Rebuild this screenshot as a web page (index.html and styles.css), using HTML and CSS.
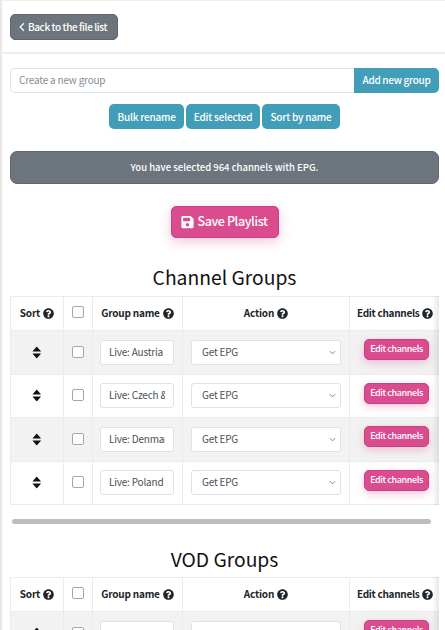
FILE: index.html
```html
<!DOCTYPE html>
<html lang="en">
<head>
<meta charset="utf-8">
<title>Playlist groups</title>
<link rel="stylesheet" href="styles.css">
</head>
<body>
<div class="page">
  <header class="topbar">
    <button class="btn btn-grey back"><svg class="chev" viewBox="0 0 8 12"><path d="M6.5 1 1.5 6l5 5" fill="none" stroke="currentColor" stroke-width="1.6"/></svg>Back to the file list</button>
  </header>
  <main class="content">
    <div class="newgroup">
      <input class="newgroup-input" placeholder="Create a new group">
      <button class="btn-add">Add new group</button>
    </div>
    <div class="actions">
      <button class="btn btn-teal">Bulk rename</button>
      <button class="btn btn-teal">Edit selected</button>
      <button class="btn btn-teal">Sort by name</button>
    </div>
    <div class="notice">You have selected 964 channels with EPG.</div>
    <div class="save-row">
      <button class="btn-save"><svg class="disk" viewBox="0 0 448 512"><path fill="currentColor" d="M433.9 129.9l-83.9-83.9A48 48 0 0 0 316.1 32H48C21.5 32 0 53.5 0 80v352c0 26.5 21.5 48 48 48h352c26.5 0 48-21.5 48-48V163.9a48 48 0 0 0-14.1-34zM224 416c-35.3 0-64-28.7-64-64s28.7-64 64-64 64 28.7 64 64-28.7 64-64 64zm96-304.5V212c0 6.6-5.4 12-12 12H76c-6.6 0-12-5.4-12-12V108c0-6.6 5.4-12 12-12h228.5c3.2 0 6.2 1.3 8.5 3.5l3.5 3.5c2.3 2.3 3.5 5.3 3.5 8.5z"/></svg>Save Playlist</button>
    </div>

    <h2 class="title">Channel Groups</h2>
    <div class="scroller">
      <table class="grid">
        <thead>
          <tr>
            <th class="c-sort">Sort <svg class="help" viewBox="0 0 512 512"><use href="#q"/></svg></th>
            <th class="c-check"><span class="check"></span></th>
            <th class="c-name">Group name <svg class="help" viewBox="0 0 512 512"><use href="#q"/></svg></th>
            <th class="c-action">Action <svg class="help" viewBox="0 0 512 512"><use href="#q"/></svg></th>
            <th class="c-edit"><span class="edit-head">Edit channels <svg class="help" viewBox="0 0 512 512"><use href="#q"/></svg></span></th>
          </tr>
        </thead>
        <tbody>
          <tr class="odd">
            <td><svg class="sort" viewBox="0 0 12 16"><use href="#s"/></svg></td>
            <td><span class="check"></span></td>
            <td><input class="name" value="Live: Austria"></td>
            <td><div class="select">Get EPG<svg class="caret" viewBox="0 0 8 5"><path d="M1 1l3 3 3-3" fill="none" stroke="currentColor" stroke-width="1"/></svg></div></td>
            <td><button class="btn-edit">Edit channels</button></td>
          </tr>
          <tr>
            <td><svg class="sort" viewBox="0 0 12 16"><use href="#s"/></svg></td>
            <td><span class="check"></span></td>
            <td><input class="name" value="Live: Czech &amp; Slovakia"></td>
            <td><div class="select">Get EPG<svg class="caret" viewBox="0 0 8 5"><path d="M1 1l3 3 3-3" fill="none" stroke="currentColor" stroke-width="1"/></svg></div></td>
            <td><button class="btn-edit">Edit channels</button></td>
          </tr>
          <tr class="odd">
            <td><svg class="sort" viewBox="0 0 12 16"><use href="#s"/></svg></td>
            <td><span class="check"></span></td>
            <td><input class="name" value="Live: Denmark"></td>
            <td><div class="select">Get EPG<svg class="caret" viewBox="0 0 8 5"><path d="M1 1l3 3 3-3" fill="none" stroke="currentColor" stroke-width="1"/></svg></div></td>
            <td><button class="btn-edit">Edit channels</button></td>
          </tr>
          <tr>
            <td><svg class="sort" viewBox="0 0 12 16"><use href="#s"/></svg></td>
            <td><span class="check"></span></td>
            <td><input class="name" value="Live: Poland"></td>
            <td><div class="select">Get EPG<svg class="caret" viewBox="0 0 8 5"><path d="M1 1l3 3 3-3" fill="none" stroke="currentColor" stroke-width="1"/></svg></div></td>
            <td><button class="btn-edit">Edit channels</button></td>
          </tr>
        </tbody>
      </table>
    </div>
    <div class="scrollbar"><div class="thumb"></div></div>

    <h2 class="title title-vod">VOD Groups</h2>
    <div class="scroller">
      <table class="grid">
        <thead>
          <tr>
            <th class="c-sort">Sort <svg class="help" viewBox="0 0 512 512"><use href="#q"/></svg></th>
            <th class="c-check"><span class="check"></span></th>
            <th class="c-name">Group name <svg class="help" viewBox="0 0 512 512"><use href="#q"/></svg></th>
            <th class="c-action">Action <svg class="help" viewBox="0 0 512 512"><use href="#q"/></svg></th>
            <th class="c-edit"><span class="edit-head">Edit channels <svg class="help" viewBox="0 0 512 512"><use href="#q"/></svg></span></th>
          </tr>
        </thead>
        <tbody>
          <tr class="odd">
            <td><svg class="sort" viewBox="0 0 12 16"><use href="#s"/></svg></td>
            <td><span class="check"></span></td>
            <td><input class="name" value=""></td>
            <td><div class="select"></div></td>
            <td><button class="btn-edit">Edit channels</button></td>
          </tr>
        </tbody>
      </table>
    </div>
  </main>
</div>
<svg class="defs" aria-hidden="true">
  <symbol id="q" viewBox="0 0 512 512"><path fill="currentColor" d="M504 256c0 137-111 248-248 248S8 393 8 256 119 8 256 8s248 111 248 248zM262.700 90c-54.500 0-89.300 23-116.500 63.800-3.500 5.300-2.400 12.400 2.700 16.300l34.700 26.300c5.200 3.900 12.600 3 16.700-2.100 17.900-22.700 30.100-35.800 57.300-35.800 20.400 0 45.700 13.100 45.700 32.900 0 14.900-12.300 22.600-32.400 33.900C247.100 238.500 216 254.900 216 296v4c0 6.600 5.400 12 12 12h56c6.600 0 12-5.400 12-12v-1.300c0-28.500 83.200-29.700 83.200-106.700 0-58-60.200-102-116.500-102zM256 338c-25.400 0-46 20.600-46 46s20.600 46 46 46 46-20.600 46-46-20.600-46-46-46z"/></symbol>
  <symbol id="s" viewBox="0 0 12 16"><path fill="currentColor" d="M6 0.500 11.500 6.800H0.500zM6 15.500 0.500 9.200H11.500z"/></symbol>
</svg>
</body>
</html>
```
FILE: styles.css
```css
* { box-sizing: border-box; }
html, body { margin: 0; padding: 0; background: #fff; height: 100%; overflow: hidden; }
body {
  font-family: "Noto Sans CJK JP", "Noto Sans", sans-serif;
  color: #212529;
  font-size: 10px;
  letter-spacing: -0.2px;
}
.page { width: 445px; height: 630px; overflow: hidden; border-left: 2px solid #e8e8e8; border-top: 1px solid #efefef; }
.topbar { height: 53px; padding: 13px 0 0 8px; border-bottom: 2px solid #eee; }
.btn { border: 0; font: inherit; letter-spacing: inherit; border-radius: 5px; cursor: pointer; white-space: nowrap; }
.btn-grey { display: flex; align-items: center; gap: 3px; width: 108px; height: 26px; padding: 0 0 2px 8px; background: #6c757d; color: #fff; font-size: 10px; letter-spacing: -0.4px; font-weight: 500; border: 1px solid #5f676e; }
.chev { width: 6px; height: 10px; margin-top: 1px; }
.content { padding: 14px 6px 0 8px; }
.newgroup { display: flex; height: 25px; }
.newgroup-input { flex: 1; min-width: 0; border: 1px solid #dee2e6; border-right: 0; border-radius: 5px 0 0 5px; padding: 0 8px 2px; font: inherit; letter-spacing: inherit; font-size: 10px; outline: 0; }
.newgroup-input::placeholder { color: #868e96; }
.btn-add { width: 85px; padding: 0 0 2px; white-space: nowrap; border: 0; background: #429eb8; color: #fff; font: inherit; letter-spacing: -0.3px; font-size: 10px; font-weight: 500; border-radius: 0 5px 5px 0; }
.actions { display: flex; justify-content: center; gap: 2px; margin-top: 11px; }
.btn-teal { height: 25px; padding: 0 8px 1px; background: #429eb8; color: #fff; font-size: 10px; font-weight: 500; }
.notice { height: 33px; margin-top: 22px; padding-bottom: 2px; background: #6c757d; color: #fff; border: 1px solid #5f676e; border-radius: 7px; display: flex; align-items: center; justify-content: center; font-size: 9.500px; letter-spacing: 0; font-weight: 500; }
.save-row { display: flex; justify-content: center; margin-top: 22px; }
.btn-save { display: flex; align-items: center; justify-content: center; gap: 3px; width: 108px; height: 32px; padding: 0 0 3px; white-space: nowrap; background: #db4b8f; color: #fff; border: 1px solid #c9417f; border-radius: 5px; font: inherit; font-size: 12.500px; letter-spacing: -0.4px; font-weight: 500; box-shadow: 0 4px 12px rgba(219, 75, 143, .3); }
.disk { width: 13px; height: 14px; margin-top: 2px; }
.title { margin: 24px 0 0; height: 34px; font-size: 19.300px; letter-spacing: 0; font-weight: 400; line-height: 30px; text-align: center; color: #111; }
.scroller { overflow: hidden; position: relative; width: 429px; }
.scroller::after { content: ""; position: absolute; top: 0; right: 0; bottom: 0; width: 7px; background: linear-gradient(to right, rgba(0,0,0,0), rgba(0,0,0,.09)); }
.grid { border-collapse: collapse; table-layout: fixed; width: 460px; font-size: 10px; }
.grid th, .grid td { border: 1px solid #e9ecef; text-align: center; vertical-align: middle; padding: 0; }
.grid th { height: 34px; padding-bottom: 2px; font-weight: 700; color: #212529; white-space: nowrap; }
.grid td { height: 43.500px; }
.c-sort { width: 53px; }
.c-check { width: 29px; }
.c-name { width: 90px; }
.c-action { width: 167px; }
.c-edit { width: 121px; letter-spacing: -0.3px; }
.edit-head { display: block; text-align: left; padding-left: 7px; }
.odd td { background: #f2f2f2; }
.help { width: 11px; height: 11px; vertical-align: -2px; margin-left: 1px; color: #212529; }
.check { display: inline-block; width: 12px; height: 12px; margin-top: -5px; background: #fff; border: 1px solid #a6a6a6; border-radius: 2px; vertical-align: middle; }
.sort { width: 9.500px; height: 13px; display: block; margin: 0 auto; color: #111; }
.name { width: 74px; height: 25px; border: 1px solid #dee2e6; border-radius: 3px; padding: 0 8px 2px; font: inherit; letter-spacing: inherit; font-size: 10px; color: #495057; outline: 0; background: #fff; display: block; margin: 0 0 0 7px; }
.select { position: relative; width: 150px; height: 25px; margin: 0 auto; border: 1px solid #dee2e6; border-radius: 3px; background: #fff; padding-left: 10px; text-align: left; font-size: 10px; line-height: 21px; color: #495057; }
.caret { position: absolute; right: 4px; top: 9px; width: 7px; height: 5px; color: #6c757d; }
.btn-edit { display: block; width: 65px; height: 21px; margin: -5px 0 0 14px; padding: 0 0 2px; background: #db4b8f; color: #fff; border: 1px solid #c9417f; border-radius: 5px; font: inherit; font-size: 9px; letter-spacing: -0.4px; font-weight: 500; box-shadow: 0 3px 9px rgba(219, 75, 143, .3); white-space: nowrap; }
.scrollbar { width: 429px; height: 20px; padding: 14px 2px 0 2px; }
.thumb { height: 5px; width: 419px; background: #bdbdbd; border-radius: 3px; }
.title-vod { margin-top: 19px; height: 33px; }
.defs { position: absolute; width: 0; height: 0; }
```
